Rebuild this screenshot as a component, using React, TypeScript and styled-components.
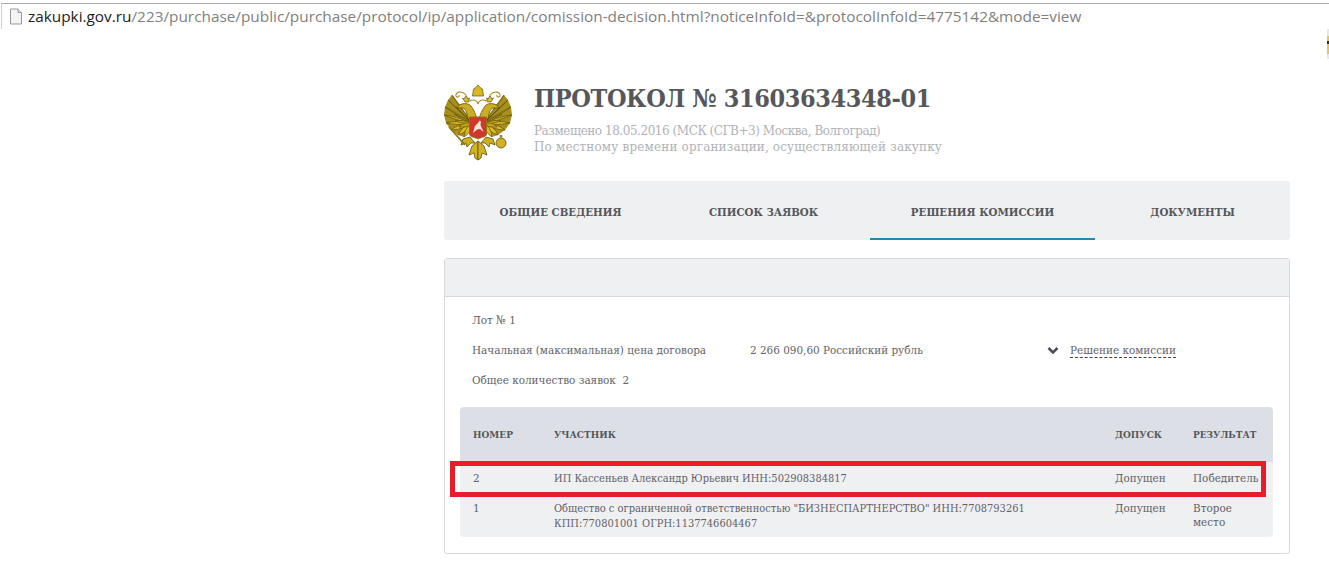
import React from 'react';
import styled, { createGlobalStyle } from 'styled-components';

const GlobalStyle = createGlobalStyle`
  html, body {
    margin: 0;
    padding: 0;
    background: #fff;
  }
  body {
    font-family: "DejaVu Serif Condensed", "DejaVu Serif", serif;
    font-stretch: condensed;
    color: #5f6268;
    overflow: hidden;
  }
`;

// wing feathers, from the top of the wing down to the body: tip x, tip y
const feathers = [
  [8, 10], [4, 15], [1, 22], [0, 30], [2, 38], [7, 45], [14, 50], [20, 52],
];

// shorter feathers laid over the root of the wing
const coverts = [
  [12, 22], [10, 29], [11, 36], [15, 42],
];

const featherPath = (x: number, y: number, rootX: number, rootY: number, fat: number) => {
  const midX = (x + rootX) / 2;
  const midY = (y + rootY) / 2;
  return `M${rootX} ${rootY} Q${midX - fat} ${midY - fat} ${x} ${y} Q${midX + fat} ${midY + fat} ${rootX} ${rootY} Z`;
};

const EagleHalf = () => (
  <g>
    <path d="M28 38 L8 10 L4 15 L1 22 L0 30 L2 38 L7 45 L14 50 L20 52 Z" fill="#a88f1c" />
    {feathers.map(([x, y]) => (
      <path key={`${x}-${y}`} d={featherPath(x, y, 28, 38, 3)} fill="#dcbb22" stroke="#5e5210" strokeWidth="0.7" />
    ))}
    {coverts.map(([x, y]) => (
      <path key={`${x}-${y}`} d={featherPath(x, y, 28, 38, 3)} fill="#c3a31b" stroke="#5e5210" strokeWidth="0.7" />
    ))}
    <path d="M33 34 C31 27 29 24 27 21 C24 18 20 18 15 20 L13 23 L19 23 C22 24 23 28 24 34 Z" fill="#cdae20" stroke="#5e5210" strokeWidth="0.8" />
    <path d="M21 17 L18.5 13 L20 14 L22 10.5 L24 14 L25.5 13 L24.5 17 Z" fill="#dcbc2a" stroke="#5e5210" strokeWidth="0.7" />
    <path d="M22 10 C18 5 11 7 12 11 C13 13 16 12 15 10 M25 16 C30 14 33 15 34 19" fill="none" stroke="#a88f1c" strokeWidth="1.1" />
    <path d="M26 52 L19 54 L17 60 L22 58 L23 62 L27 58 L31 58 Z" fill="#cdae20" stroke="#5e5210" strokeWidth="0.8" />
    <path d="M34 56 L28 61 L25 70 L30 68 L31 73 L34 75 Z" fill="#d2b222" stroke="#5e5210" strokeWidth="0.8" />
  </g>
);

const Emblem = () => (
  <EmblemSvg viewBox="0 0 69 76">
    <EagleHalf />
    <g transform="translate(68 0) scale(-1 1)">
      <EagleHalf />
    </g>
    {/* crown */}
    <path d="M34 0 L36 2.5 L38.5 4 L39.5 11 L28.5 11 L29.5 4 L32 2.5 Z" fill="#d8b723" stroke="#5e5210" strokeWidth="0.7" />
    {/* sceptre and orb */}
    <path d="M5 42 L21 60" stroke="#8a7515" strokeWidth="1.7" />
    <circle cx="57" cy="58" r="5" fill="#d2b222" stroke="#5e5210" strokeWidth="0.8" />
    <path d="M57 50 V53 M55.5 51 H58.5" stroke="#5e5210" strokeWidth="0.9" />
    {/* shield */}
    <path d="M25.5 32 H42.5 V49 C42.5 52 38 52 34 54 C30 52 25.5 52 25.5 49 Z" fill="#d0392a" stroke="#8a7515" strokeWidth="1" />
    <path d="M29 48 L31 41 L34 38 L35.5 35.5 L37 36.5 L36.5 40 L39.5 47 L36 44 L33 44.5 Z" fill="#f2e8da" />
  </EmblemSvg>
);

const columns = ['НОМЕР', 'УЧАСТНИК', 'ДОПУСК', 'РЕЗУЛЬТАТ'];

const rows = [
  {
    num: '2',
    name: 'ИП Кассеньев Александр Юрьевич ИНН:502908384817',
    access: 'Допущен',
    result: 'Победитель',
    tall: false,
  },
  {
    num: '1',
    name: 'Общество с ограниченной ответственностью "БИЗНЕСПАРТНЕРСТВО" ИНН:7708793261 КПП:770801001 ОГРН:1137746604467',
    access: 'Допущен',
    result: 'Второе место',
    tall: true,
  },
];

const tabs = ['ОБЩИЕ СВЕДЕНИЯ', 'СПИСОК ЗАЯВОК', 'РЕШЕНИЯ КОМИССИИ', 'ДОКУМЕНТЫ'];

export default function App() {
  return (
    <Page>
      <GlobalStyle />
      <AddressBar>
        <FileIcon viewBox="0 0 14 17">
          <path d="M1.5 1 H9 L12.5 4.5 V16 H1.5 Z" fill="#f4f4f4" stroke="#9a9a9a" strokeWidth="1" />
          <path d="M9 1 V4.5 H12.5" fill="#e2e2e2" stroke="#9a9a9a" strokeWidth="1" />
        </FileIcon>
        <Url>
          <Host>zakupki.gov.ru</Host>/223/purchase/public/purchase/protocol/ip/application/comission-decision.html?noticeInfoId=&amp;protocolInfoId=4775142&amp;mode=view
        </Url>
      </AddressBar>
      <EdgeThumb />

      <Content>
        <Header>
          <Emblem />
          <HeaderText>
            <Title>ПРОТОКОЛ № 31603634348-01</Title>
            <Meta>
              <MetaLine $spacing={-0.45}>Размещено 18.05.2016 (МСК (СГВ+3) Москва, Волгоград)</MetaLine>
              <MetaLine $spacing={0.15}>По местному времени организации, осуществляющей закупку</MetaLine>
            </Meta>
          </HeaderText>
        </Header>

        <Tabs>
          {tabs.map((t, i) => (
            <Tab key={t} $active={i === 2}>{t}</Tab>
          ))}
        </Tabs>

        <Panel>
          <PanelHead />
          <PanelBody>
            <LotLine>Лот № 1</LotLine>
            <PriceLine>
              <span>Начальная (максимальная) цена договора</span>
              <span>2 266 090,60 Российский рубль</span>
              <Decision>
                <Chevron viewBox="0 0 12 9">
                  <path d="M1.5 2 L6 6.5 L10.5 2" fill="none" stroke="#4d5056" strokeWidth="2.6" />
                </Chevron>
                <DecisionLink>Решение комиссии</DecisionLink>
              </Decision>
            </PriceLine>
            <LotLine>Общее количество заявок&nbsp; 2</LotLine>

            <Table>
              <HeadRow>
                {columns.map((c) => (
                  <HeadCell key={c}>{c}</HeadCell>
                ))}
              </HeadRow>
              {rows.map((r) => (
                <Row key={r.num} $tall={r.tall}>
                  <span>{r.num}</span>
                  <NameCell>{r.name}</NameCell>
                  <span>{r.access}</span>
                  <ResultCell>{r.result}</ResultCell>
                </Row>
              ))}
              <Highlight />
            </Table>
          </PanelBody>
        </Panel>
      </Content>
    </Page>
  );
}

const Page = styled.div`
  position: relative;
  width: 1329px;
  height: 571px;
  overflow: hidden;
`;

const AddressBar = styled.div`
  display: flex;
  align-items: center;
  gap: 5px;
  box-sizing: border-box;
  height: 26px;
  margin: 3px 0 0 1px;
  padding: 0 0 1px 7px;
  border-top: 1px solid #ababab;
  border-left: 1px solid #d0d0d0;
`;

const FileIcon = styled.svg`
  width: 14px;
  height: 17px;
  flex: none;
`;

const Url = styled.div`
  font-family: "Open Sans", "Noto Sans", sans-serif;
  font-stretch: normal;
  font-size: 15.35px;
  color: #7f7f7f;
  white-space: nowrap;
`;

const Host = styled.span`
  color: #222;
`;

const EdgeThumb = styled.div`
  position: absolute;
  right: 0;
  top: 29px;
  width: 2px;
  height: 30px;
  background: linear-gradient(#e8e8e8 0 25%, #e6c25a 25% 40%, #1f2f55 40% 50%, #e6c25a 50% 85%, #e8e8e8 85%);
`;

const Content = styled.main`
  width: 846px;
  margin-left: 444px;
`;

const Header = styled.header`
  display: flex;
  gap: 21px;
  height: 152px;
  box-sizing: border-box;
  padding-top: 56px;
`;

const EmblemSvg = styled.svg`
  width: 69px;
  height: 76px;
  flex: none;
  filter: blur(0.35px);
`;

const HeaderText = styled.div`
  display: flex;
  flex-direction: column;
  margin-top: -2px;
`;

const Title = styled.h1`
  margin: 0;
  font-size: 25px;
  line-height: 32px;
  font-weight: 700;
  letter-spacing: -0.4px;
  color: #55575b;
  white-space: nowrap;
`;

const Meta = styled.div`
  margin-top: 8px;
  color: #b0b2b6;
`;

const MetaLine = styled.div<{ $spacing: number }>`
  font-family: "DejaVu Serif", serif;
  font-stretch: normal;
  font-size: 12px;
  line-height: 16px;
  letter-spacing: ${({ $spacing }) => $spacing}px;
  white-space: nowrap;
`;

const Tabs = styled.nav`
  display: grid;
  grid-template-columns: 233px 193px 225px 195px;
  height: 59px;
  background: #eff0f2;
  border-radius: 3px;
`;

const Tab = styled.div<{ $active: boolean }>`
  display: flex;
  align-items: center;
  justify-content: center;
  padding-top: 3px;
  font-size: 11.4px;
  font-weight: 700;
  color: #55575b;
  white-space: nowrap;
  box-shadow: ${({ $active }) => ($active ? 'inset 0 -2px 0 #2089b5' : 'none')};

  &:nth-child(2) {
    padding-right: 20px;
  }
`;

const Panel = styled.section`
  box-sizing: border-box;
  height: 296px;
  margin-top: 18px;
  border: 1px solid #d6d8dc;
  border-radius: 3px;
`;

const PanelHead = styled.div`
  height: 37px;
  background: #eff0f2;
  border-bottom: 1px solid #d6d8dc;
`;

const PanelBody = styled.div`
  padding: 8px 16px 0 15px;
  font-size: 11.6px;
  color: #5f6268;
`;

const LotLine = styled.div`
  height: 30px;
  line-height: 30px;
  padding-left: 12px;
  white-space: nowrap;
`;

const PriceLine = styled.div`
  display: grid;
  grid-template-columns: 278px 297px 1fr;
  height: 30px;
  line-height: 30px;
  padding-left: 12px;
  white-space: nowrap;
`;

const Decision = styled.div`
  display: flex;
  align-items: center;
  gap: 11px;
`;

const Chevron = styled.svg`
  width: 12px;
  height: 9px;
  flex: none;
`;

const DecisionLink = styled.span`
  line-height: 14px;
  border-bottom: 1px dashed #3e4046;
`;

const Table = styled.div`
  position: relative;
  margin-top: 12px;
  width: 813px;
`;

const HeadRow = styled.div`
  display: grid;
  grid-template-columns: 81px 561px 78px 1fr;
  align-items: center;
  height: 55px;
  padding-left: 13px;
  background: #dce0e6;
  border-radius: 4px 4px 0 0;
`;

const HeadCell = styled.div`
  font-size: 10px;
  font-weight: 700;
  color: #55575b;
  white-space: nowrap;
`;

const Row = styled.div<{ $tall: boolean }>`
  display: grid;
  grid-template-columns: 81px 561px 78px 1fr;
  box-sizing: border-box;
  height: ${({ $tall }) => ($tall ? '43px' : '31px')};
  margin-top: ${({ $tall }) => ($tall ? '1px' : '0')};
  padding: ${({ $tall }) => ($tall ? '7px' : '9px')} 0 0 13px;
  background: #eff0f2;
  line-height: 14px;
  border-radius: ${({ $tall }) => ($tall ? '0 0 4px 4px' : '0')};
`;

const NameCell = styled.span`
  font-size: 11px;
  line-height: 15px;
  padding-right: 20px;
`;

const ResultCell = styled.span`
  padding-right: 10px;
`;

const Highlight = styled.div`
  position: absolute;
  left: -10px;
  top: 54px;
  width: 816px;
  height: 36px;
  box-sizing: border-box;
  border: 5px solid #e81c2a;
`;
